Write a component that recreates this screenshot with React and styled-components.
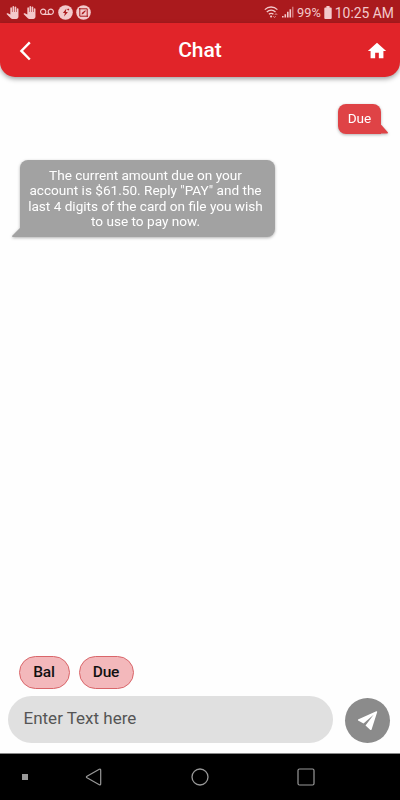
import React from "react";
import styled, { createGlobalStyle } from "styled-components";
import { MdHome, MdPanTool, MdVoicemail } from "react-icons/md";

const GlobalStyle = createGlobalStyle`
  * {
    box-sizing: border-box;
  }
  body {
    margin: 0;
    font-family: Roboto, "Liberation Sans", sans-serif;
    background-color: #fefefe;
  }
  svg {
    display: block;
    flex-shrink: 0;
  }
`;

const StyledScreen = styled.div`
  width: 400px;
  height: 800px;
  display: flex;
  flex-direction: column;
  overflow: hidden;
`;

const StyledStatusBar = styled.div`
  height: 23px;
  display: flex;
  align-items: center;
  justify-content: space-between;
  padding: 1px 6px 0;
  background-color: #aa1a1d;
  color: #f3c9cb;
`;

const StyledStatusGroup = styled.div`
  display: flex;
  align-items: center;
  gap: ${({ $gap }) => $gap}px;
`;

const StyledStatusText = styled.span`
  font-size: ${({ $size }) => $size}px;
  line-height: 22px;
  padding-top: 1px;
  white-space: nowrap;
`;

const StyledHeader = styled.header`
  height: 54px;
  display: grid;
  grid-template-columns: 50px 1fr 50px;
  align-items: center;
  background-color: #e12429;
  border-radius: 0 0 15px 15px;
  box-shadow: 0 2px 5px rgba(0, 0, 0, 0.38);
  color: white;
  h1 {
    margin: 0;
    font-size: 21px;
    line-height: 54px;
    font-weight: 500;
    text-align: center;
  }
`;

const StyledIconButton = styled.button`
  height: 54px;
  display: flex;
  align-items: center;
  justify-content: ${({ $end }) => ($end ? "flex-end" : "flex-start")};
  padding: ${({ $end }) => ($end ? "1px 12px 0 0" : "1px 0 0 19px")};
  border: none;
  background: none;
  color: white;
`;

const StyledMessages = styled.main`
  flex: 1;
  display: flex;
  flex-direction: column;
  align-items: flex-start;
  gap: 26px;
  padding: 27px 19px 0 20px;
`;

const StyledBubble = styled.div`
  position: relative;
  align-self: ${({ $sent }) => ($sent ? "flex-end" : "flex-start")};
  width: ${({ $sent }) => ($sent ? "43px" : "255px")};
  padding: ${({ $sent }) => ($sent ? "7px 0" : "8px 4px 7px 0")};
  border-radius: ${({ $sent }) => ($sent ? "8px 8px 0 8px" : "8px 8px 8px 0")};
  background-color: ${({ $sent }) => ($sent ? "#df4346" : "#a2a2a2")};
  filter: drop-shadow(0 1px 1.5px rgba(0, 0, 0, 0.3));
  color: white;
  font-size: 13.6px;
  line-height: 15.6px;
  text-align: center;
  white-space: pre;
  &::after {
    content: "";
    position: absolute;
    bottom: 0;
    ${({ $sent }) => ($sent ? "right: -7px" : "left: -8px")};
    width: 9px;
    height: 9px;
    background-color: inherit;
    clip-path: ${({ $sent }) =>
      $sent
        ? "polygon(0 0, 22% 0, 100% 88%, 95% 100%, 0 100%)"
        : "polygon(100% 0, 88% 0, 0 88%, 5% 100%, 100% 100%)"};
  }
`;

const StyledSuggestions = styled.div`
  display: flex;
  gap: 9px;
  padding: 0 19px;
`;

const StyledChip = styled.button`
  height: 33px;
  width: ${({ $width }) => $width}px;
  padding: 0 1px 1px 0;
  border: 1px solid #d9666a;
  border-radius: 17px;
  background-color: #f3b8bb;
  color: #111;
  font-family: inherit;
  font-size: 15.5px;
  font-weight: 500;
  letter-spacing: -0.2px;
`;

const StyledComposer = styled.div`
  display: flex;
  align-items: center;
  gap: 12px;
  padding: 7px 10px 10px 8px;
`;

const StyledInput = styled.input`
  width: 325px;
  height: 47px;
  padding: 0 16px 3px 15.5px;
  border: none;
  border-radius: 24px;
  outline: none;
  background-color: #e0e0e0;
  font-family: inherit;
  font-size: 17px;
  &::placeholder {
    color: #555;
    opacity: 1;
  }
`;

const StyledSend = styled.button`
  width: 45px;
  height: 45px;
  margin-top: 2px;
  padding: 0;
  border: none;
  border-radius: 50%;
  background-color: #8b8b8b;
`;

const StyledNavBar = styled.nav`
  height: 47px;
  display: flex;
  align-items: center;
  padding-left: 22px;
  border-top: 1px solid #888;
  background-color: #000;
`;

const StyledNavDot = styled.span`
  width: 6px;
  height: 6px;
  background-color: #999;
`;

const StyledNavButtons = styled.div`
  display: flex;
  align-items: center;
  gap: 88px;
  padding-left: 57px;
`;

const BoltBadge = () => (
  <svg width="15" height="15" viewBox="0 0 15 15">
    <circle cx="7.5" cy="7.5" r="7.3" fill="currentColor" />
    <path d="M8.4 3.4 4.9 8h2l-.8 3.6L9.9 7H7.8z" fill="#aa1a1d" />
    <path d="m10.1 3.2.5.9.9.3-.8.5-.4.9-.5-.9-.9-.3.8-.5z" fill="#aa1a1d" />
  </svg>
);

const EditBadge = () => (
  <svg width="15" height="15" viewBox="0 0 15 15" fill="none" stroke="#aa1a1d">
    <circle cx="7.5" cy="7.5" r="7.3" fill="currentColor" stroke="none" />
    <path d="M3 3.8h8.2v8M3.8 3v8.2H12" strokeWidth="1" />
    <path d="m5.6 9.4.4-1.6 3.3-2.5.5.6-2.6 3z" fill="#aa1a1d" stroke="none" />
  </svg>
);

const WifiIcon = () => (
  <svg width="15" height="14" viewBox="0 0 15 14" fill="none" stroke="currentColor">
    <path d="M.8 4.6c3.7-3.5 8.9-3.5 12.6 0M2.8 7c2.5-2.5 6.2-2.5 8.7 0M4.9 9.3c1.3-1.3 3.2-1.3 4.5 0" strokeWidth="1.3" />
    <circle cx="7.1" cy="11.5" r="1.1" fill="currentColor" stroke="none" />
    <path d="m9.5 11.4 1 1 1-1M11 9.7l1-1 1 1" strokeWidth=".9" />
  </svg>
);

const SignalIcon = () => (
  <svg width="12" height="12" viewBox="0 0 12 12" fill="currentColor">
    <path d="M0 10h1.6v1.5H0zM2.5 8.2h1.6v3.3H2.5zM5 5.8h1.6v5.7H5zM7.5 3.2h1.6v8.3H7.5z" />
    <path d="M10 .8h1.5v10.7H10z" opacity=".5" />
  </svg>
);

const BatteryIcon = () => (
  <svg width="8" height="13" viewBox="0 0 8 13" fill="currentColor">
    <path d="M2.4 0h3.2v1.6h1.1a1 1 0 0 1 1 1V12a1 1 0 0 1-1 1H1.3a1 1 0 0 1-1-1V2.6a1 1 0 0 1 1-1h1.1z" />
  </svg>
);

const BackIcon = () => (
  <svg width="13" height="20" viewBox="0 0 13 20" fill="none">
    <path d="M10.8 1.4 2.4 9.9l8.4 8.6" stroke="currentColor" strokeWidth="2.4" />
  </svg>
);

const PlaneIcon = () => (
  <svg width="45" height="45" viewBox="0 0 45 45" fill="white">
    <path d="M31.3 13.2c.6-.2 1 .1.9.8l-5.6 17.5c-.2.7-1 .8-1.5.3l-4.6-4.4 8.1-10.6-10.1 8.8-5-2.8c-.8-.4-.8-1.2 0-1.6z" />
  </svg>
);

const MESSAGES = [
  { sent: true, text: "Due" },
  {
    sent: false,
    text: `The current amount due on your
account is $61.50. Reply "PAY" and the
last 4 digits of the card on file you wish
to use to pay now.`,
  },
];

const StatusBar = () => {
  return (
    <StyledStatusBar>
      <StyledStatusGroup $gap={4}>
        <MdPanTool size={13} />
        <MdPanTool size={13} />
        <MdVoicemail size={14} />
        <StyledStatusGroup $gap={3}>
          <BoltBadge />
          <EditBadge />
        </StyledStatusGroup>
      </StyledStatusGroup>
      <StyledStatusGroup $gap={3}>
        <WifiIcon />
        <SignalIcon />
        <StyledStatusText $size={12.8}>99%</StyledStatusText>
        <BatteryIcon />
        <StyledStatusText $size={13.9}>10:25 AM</StyledStatusText>
      </StyledStatusGroup>
    </StyledStatusBar>
  );
};

const NavBar = () => {
  return (
    <StyledNavBar>
      <StyledNavDot />
      <StyledNavButtons>
        <svg width="18" height="18" viewBox="0 0 18 18" fill="none" stroke="#999" strokeWidth="1.2">
          <path d="M14.3 1.2 2 8.2q-1.2.8 0 1.6l12.3 7q1.4.6 1.4-1V2.2q0-1.6-1.4-1z" />
        </svg>
        <svg width="18" height="18" viewBox="0 0 18 18" fill="none" stroke="#999" strokeWidth="1.3">
          <circle cx="9" cy="9" r="8" />
        </svg>
        <svg width="18" height="18" viewBox="0 0 18 18" fill="none" stroke="#999" strokeWidth="1.2">
          <rect x="1" y="1" width="16" height="16" rx="1.5" />
        </svg>
      </StyledNavButtons>
    </StyledNavBar>
  );
};

const App = () => {
  return (
    <StyledScreen>
      <GlobalStyle />
      <StatusBar />
      <StyledHeader>
        <StyledIconButton aria-label="Back">
          <BackIcon />
        </StyledIconButton>
        <h1>Chat</h1>
        <StyledIconButton $end aria-label="Home">
          <MdHome size={22} />
        </StyledIconButton>
      </StyledHeader>
      <StyledMessages>
        {MESSAGES.map(({ sent, text }) => (
          <StyledBubble key={text} $sent={sent}>
            {text}
          </StyledBubble>
        ))}
      </StyledMessages>
      <StyledSuggestions>
        <StyledChip $width={51}>Bal</StyledChip>
        <StyledChip $width={55}>Due</StyledChip>
      </StyledSuggestions>
      <StyledComposer>
        <StyledInput placeholder="Enter Text here" />
        <StyledSend aria-label="Send">
          <PlaneIcon />
        </StyledSend>
      </StyledComposer>
      <NavBar />
    </StyledScreen>
  );
};

export default App;
